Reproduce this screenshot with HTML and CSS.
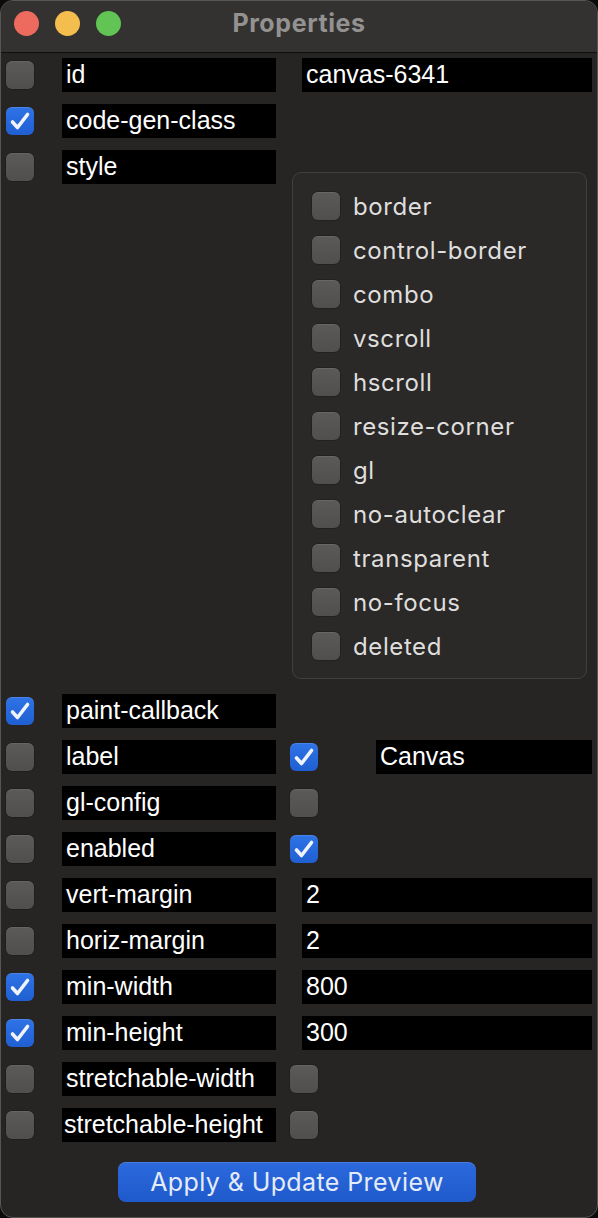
FILE: index.html
```html
<!DOCTYPE html>
<html>
<head>
<meta charset="utf-8">
<title>Properties</title>
<link rel="stylesheet" href="styles.css">
</head>
<body>
<div class="window">
  <div class="titlebar">
    <div class="lights">
      <span class="light red"></span>
      <span class="light yellow"></span>
      <span class="light green"></span>
    </div>
    <div class="title">Properties</div>
  </div>

  <div class="content">
    <div class="row">
      <div class="pair"><span class="cb"></span><span class="field">id</span></div>
      <span class="field value">canvas-6341</span>
    </div>
    <div class="row">
      <div class="pair"><span class="cb on"><svg viewBox="0 0 28 28"><path d="M6.5 15 L11.5 20.5 L21.5 7.5"/></svg></span><span class="field">code-gen-class</span></div>
    </div>
    <div class="row row-style">
      <div class="pair"><span class="cb"></span><span class="field">style</span></div>
      <div class="group">
        <div class="opt"><span class="cb"></span><span>border</span></div>
        <div class="opt"><span class="cb"></span><span>control-border</span></div>
        <div class="opt"><span class="cb"></span><span>combo</span></div>
        <div class="opt"><span class="cb"></span><span>vscroll</span></div>
        <div class="opt"><span class="cb"></span><span>hscroll</span></div>
        <div class="opt"><span class="cb"></span><span>resize-corner</span></div>
        <div class="opt"><span class="cb"></span><span>gl</span></div>
        <div class="opt"><span class="cb"></span><span>no-autoclear</span></div>
        <div class="opt"><span class="cb"></span><span>transparent</span></div>
        <div class="opt"><span class="cb"></span><span>no-focus</span></div>
        <div class="opt"><span class="cb"></span><span>deleted</span></div>
      </div>
    </div>
    <div class="row">
      <div class="pair"><span class="cb on"><svg viewBox="0 0 28 28"><path d="M6.5 15 L11.5 20.5 L21.5 7.5"/></svg></span><span class="field">paint-callback</span></div>
    </div>
    <div class="row">
      <div class="pair"><span class="cb"></span><span class="field">label</span></div>
      <span class="cb on side"><svg viewBox="0 0 28 28"><path d="M6.5 15 L11.5 20.5 L21.5 7.5"/></svg></span>
      <span class="field label-value">Canvas</span>
    </div>
    <div class="row">
      <div class="pair"><span class="cb"></span><span class="field">gl-config</span></div>
      <span class="cb side"></span>
    </div>
    <div class="row">
      <div class="pair"><span class="cb"></span><span class="field">enabled</span></div>
      <span class="cb on side"><svg viewBox="0 0 28 28"><path d="M6.5 15 L11.5 20.5 L21.5 7.5"/></svg></span>
    </div>
    <div class="row">
      <div class="pair"><span class="cb"></span><span class="field">vert-margin</span></div>
      <span class="field value">2</span>
    </div>
    <div class="row">
      <div class="pair"><span class="cb"></span><span class="field">horiz-margin</span></div>
      <span class="field value">2</span>
    </div>
    <div class="row">
      <div class="pair"><span class="cb on"><svg viewBox="0 0 28 28"><path d="M6.5 15 L11.5 20.5 L21.5 7.5"/></svg></span><span class="field">min-width</span></div>
      <span class="field value">800</span>
    </div>
    <div class="row">
      <div class="pair"><span class="cb on"><svg viewBox="0 0 28 28"><path d="M6.5 15 L11.5 20.5 L21.5 7.5"/></svg></span><span class="field">min-height</span></div>
      <span class="field value">300</span>
    </div>
    <div class="row">
      <div class="pair"><span class="cb"></span><span class="field">stretchable-width</span></div>
      <span class="cb side"></span>
    </div>
    <div class="row">
      <div class="pair"><span class="cb"></span><span class="field tight">stretchable-height</span></div>
      <span class="cb side"></span>
    </div>

    <div class="actions">
      <button class="apply">Apply &amp; Update Preview</button>
    </div>
  </div>
</div>
</body>
</html>
```

FILE: styles.css
```css
* { box-sizing: border-box; }

html, body {
  margin: 0;
  padding: 0;
  background: #0b0b0b;
}

.window {
  width: 598px;
  height: 1218px;
  background: #262524;
  border: 1px solid #565554;
  border-radius: 13px;
  overflow: hidden;
  display: flex;
  flex-direction: column;
}

.titlebar {
  height: 52px;
  flex: 0 0 52px;
  background: #333231;
  border-bottom: 1px solid #0e0e0e;
  display: flex;
  align-items: center;
  position: relative;
}

.lights {
  display: flex;
  gap: 16px;
  padding-left: 13px;
  margin-top: -6px;
}

.light {
  width: 25px;
  height: 25px;
  border-radius: 50%;
  display: block;
}
.red { background: #ec6a5e; }
.yellow { background: #f4be4f; }
.green { background: #61c454; }

.title {
  position: absolute;
  left: 0;
  right: 0;
  top: 7px;
  text-align: center;
  font-family: "Inter", "Noto Sans", sans-serif;
  font-weight: 700;
  font-size: 25px;
  letter-spacing: 0.6px;
  color: #939291;
  padding-left: 0;
}

.content {
  padding: 5px 0 0 5px;
  display: flex;
  flex-direction: column;
  gap: 12px;
}

.row {
  display: flex;
  align-items: center;
  min-height: 34px;
}

.row-style {
  align-items: flex-start;
}

.pair {
  display: flex;
  align-items: center;
  gap: 28px;
  height: 34px;
}

.cb {
  width: 28px;
  height: 28px;
  flex: 0 0 28px;
  border-radius: 6px;
  background: linear-gradient(180deg, #5b5a59 0%, #504f4e 100%);
  box-shadow: inset 0 1px 0 rgba(255,255,255,0.08), 0 0 0 0.5px rgba(0,0,0,0.35);
  display: block;
}

.cb.on {
  background: linear-gradient(180deg, #2f73e6 0%, #1f5fd2 100%);
  box-shadow: inset 0 1px 0 rgba(255,255,255,0.12);
}

.cb svg {
  width: 28px;
  height: 28px;
  display: block;
}

.cb svg path {
  fill: none;
  stroke: #eef3fc;
  stroke-width: 3.6;
  stroke-linecap: round;
  stroke-linejoin: round;
}

.field {
  display: block;
  width: 214px;
  height: 34px;
  background: #000;
  color: #fff;
  font-family: "Liberation Sans", Arial, sans-serif;
  font-size: 25px;
  line-height: 33px;
  padding-left: 4px;
  white-space: nowrap;
  overflow: hidden;
}

.field.tight {
  padding-left: 2px;
}

.field.value {
  width: 290px;
  margin-left: 26px;
}

.cb.side {
  margin-left: 14px;
}

.field.label-value {
  width: 216px;
  margin-left: 58px;
}

.group {
  margin: 22px 0 3px 16px;
  width: 295px;
  height: 507px;
  border: 1px solid #403f3e;
  border-radius: 9px;
  background: #2a2928;
  padding: 19px 0 0 19px;
  display: flex;
  flex-direction: column;
  gap: 16px;
}

.opt {
  display: flex;
  align-items: center;
  gap: 13px;
  height: 28px;
  font-family: "Inter", "Noto Sans", sans-serif;
  font-size: 24px;
  letter-spacing: 0.6px;
  color: #dfdedd;
}

.actions {
  padding: 8px 0 0 112px;
}

.apply {
  width: 358px;
  height: 40px;
  border: none;
  border-radius: 8px;
  background: linear-gradient(180deg, #2b69dd 0%, #1f5acb 100%);
  box-shadow: inset 0 1px 0 rgba(255,255,255,0.15);
  color: #e4ebf9;
  font-family: "Inter", "Noto Sans", sans-serif;
  font-size: 25px;
  letter-spacing: 0.4px;
  padding: 0;
  line-height: 40px;
}
```
